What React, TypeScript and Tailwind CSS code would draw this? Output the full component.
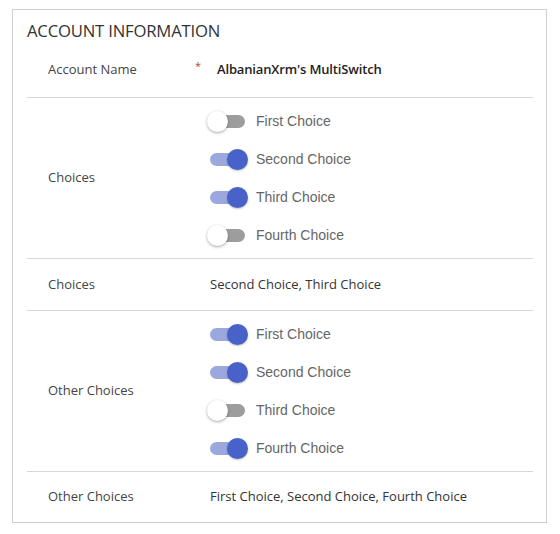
import { clsx } from "clsx";

type Choice = { label: string; on: boolean };

const CHOICES: Choice[] = [
  { label: "First Choice", on: false },
  { label: "Second Choice", on: true },
  { label: "Third Choice", on: true },
  { label: "Fourth Choice", on: false },
];

const OTHER_CHOICES: Choice[] = [
  { label: "First Choice", on: true },
  { label: "Second Choice", on: true },
  { label: "Third Choice", on: false },
  { label: "Fourth Choice", on: true },
];

function Toggle({ on }: { on: boolean }) {
  return (
    <div className="relative w-[41px] h-[21px] shrink-0">
      <div
        className={clsx(
          "absolute top-[4px] bottom-[4px] rounded-full",
          on ? "left-[3px] right-[6px] bg-[#9aa8de]" : "left-[8px] right-[3px] bg-[#9d9d9d]"
        )}
      />
      <div
        className={clsx(
          "absolute top-0 w-[21px] h-[21px] rounded-full",
          on
            ? "right-0 bg-[#4862c9] shadow-[0_1px_2px_rgba(0,0,0,0.25)]"
            : "left-0 bg-white shadow-[0_1px_3px_rgba(0,0,0,0.35)]"
        )}
      />
    </div>
  );
}

function ToggleList({ items }: { items: Choice[] }) {
  return (
    <div className="flex flex-col py-[4px]">
      {items.map((item) => (
        <div key={item.label} className="flex items-center h-[38px] gap-[8px]">
          <Toggle on={item.on} />
          <span className="text-[14px] text-[#666] font-['Liberation_Sans',Arial,sans-serif]">
            {item.label}
          </span>
        </div>
      ))}
    </div>
  );
}

function Row({
  label,
  children,
  last,
}: {
  label: string;
  children: React.ReactNode;
  last?: boolean;
}) {
  return (
    <div className={clsx("flex items-center", !last && "border-b border-[#d8d8d8]")}>
      <div className="w-[180px] pl-[21px] text-[13px] text-[#444]">{label}</div>
      <div className="flex-1">{children}</div>
    </div>
  );
}

export default function App() {
  return (
    <div className="w-[560px] h-[534px] bg-white pt-[9px] pl-[12px] font-['Open_Sans','Noto_Sans',sans-serif]">
      <div className="w-[535px] h-[514px] border border-[#cfcfcf] pl-[14px] pr-[13px]">
        <h2 className="pt-[9px] h-[32px] text-[16.7px] leading-[24px] text-[#333] tracking-[-0.2px]">
          ACCOUNT INFORMATION
        </h2>
        <div className="flex items-center h-[56px] border-b border-[#d8d8d8]">
          <div className="w-[168px] pl-[21px] text-[13px] text-[#444]">Account Name</div>
          <div className="w-[22px] text-[11px] text-[#b5474c] -mt-[6px]">*</div>
          <div className="text-[13px] font-semibold text-[#222] tracking-[-0.15px]">
            AlbanianXrm's MultiSwitch
          </div>
        </div>
        <Row label="Choices">
          <ToggleList items={CHOICES} />
        </Row>
        <Row label="Choices">
          <div className="h-[51px] pl-[3px] flex items-center text-[13px] text-[#333]">
            Second Choice, Third Choice
          </div>
        </Row>
        <Row label="Other Choices">
          <ToggleList items={OTHER_CHOICES} />
        </Row>
        <Row label="Other Choices" last>
          <div className="h-[50px] pl-[3px] flex items-center text-[13px] text-[#333]">
            First Choice, Second Choice, Fourth Choice
          </div>
        </Row>
      </div>
    </div>
  );
}
